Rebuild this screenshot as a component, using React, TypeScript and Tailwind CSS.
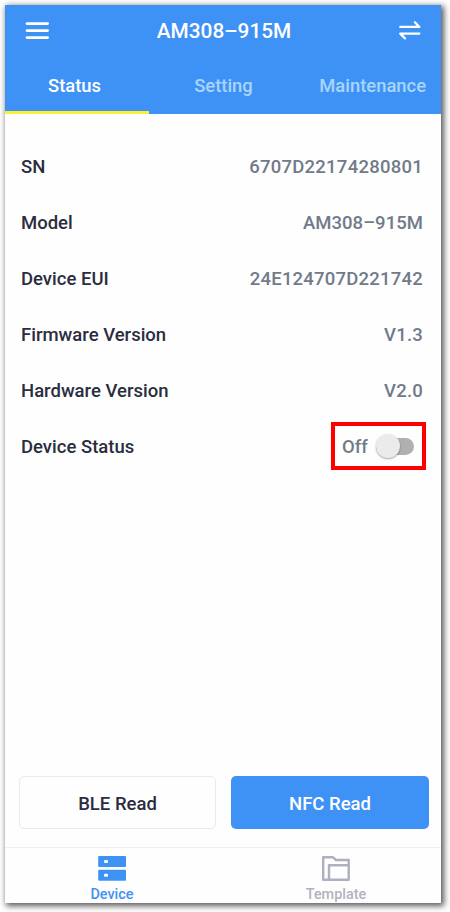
import React from "react";

const rows = [
  { label: "SN", value: "6707D22174280801", spacing: "tracking-[0.25px]" },
  { label: "Model", value: "AM308–915M", spacing: "tracking-[0.05px]" },
  { label: "Device EUI", value: "24E124707D221742", spacing: "tracking-[0.22px]" },
  { label: "Firmware Version", value: "V1.3", spacing: "tracking-[0.2px]" },
  { label: "Hardware Version", value: "V2.0", spacing: "tracking-[0.2px]" },
];

function MenuIcon() {
  return (
    <svg width="24" height="18" viewBox="0 0 24 18" stroke="#fff" strokeWidth="2.6" strokeLinecap="round">
      <path d="M1.9 1.6H22.7M1.9 8.6H22.7M1.9 15.6H22.7" />
    </svg>
  );
}

function SwapIcon() {
  return (
    <svg width="22" height="20" viewBox="0 0 22 20" fill="none" stroke="#fff" strokeWidth="2.2" strokeLinecap="round" strokeLinejoin="round">
      <path d="M1.2 5.9H20.4L15.9 1.2M20.4 12.6H1.2L6 17.4" />
    </svg>
  );
}

function DeviceIcon() {
  return (
    <svg width="28" height="25" viewBox="0 0 28 25">
      <rect x="0.2" width="27.8" height="11" rx="1" fill="#3f92f5" />
      <rect x="0.2" y="13.8" width="27.8" height="11" rx="1" fill="#3f92f5" />
      <rect x="6" y="4" width="4" height="3" rx="1.2" fill="#fff" />
      <rect x="6" y="17.7" width="4" height="3" rx="1.2" fill="#fff" />
    </svg>
  );
}

function TemplateIcon() {
  return (
    <svg width="28" height="25" viewBox="0 0 28 25" fill="none" stroke="#afb0bf" strokeWidth="2.4" strokeLinejoin="round">
      <path d="M1.2 1.2H10.8L14 4H26.7V23.7H1.2Z" />
      <path d="M7 23.7V9.3H26.7" />
    </svg>
  );
}

export default function App() {
  return (
    <div className="h-[912px] w-[450px] overflow-hidden bg-white pl-[5px] pt-[5px] font-['Roboto',sans-serif] font-medium">
      <div className="flex h-[898px] w-[436px] flex-col bg-[#fefefe] shadow-[2px_2px_6px_1px_rgba(0,0,0,0.65)]">
        <header className="flex h-[109px] flex-col bg-[#3f92f5] text-white">
          <div className="flex h-[51px] items-center justify-between pl-5 pr-5">
            <MenuIcon />
            <h1 className="text-[20.8px] leading-6">AM308–915M</h1>
            <SwapIcon />
          </div>
          <nav className="flex h-[58px] text-[18.4px] leading-[22px]">
            <div className="w-36 border-b-[3px] border-[#fcee30] pr-[5px] pt-[19px] text-center">Status</div>
            <div className="w-[149px] pt-[19px] text-center text-[#a9d5fc]">Setting</div>
            <div className="flex-1 pr-[15px] pt-[19px] text-right text-[#a9d5fc]">Maintenance</div>
          </nav>
        </header>
        <main className="flex flex-1 flex-col pt-6 text-[18.5px] leading-7 text-[#2b2d3e]">
          {rows.map((row) => (
            <div key={row.label} className="flex h-14 items-center justify-between pl-4 pr-[18px] pt-0.5">
              <span>{row.label}</span>
              <span className={`text-[#717a88] ${row.spacing}`}>{row.value}</span>
            </div>
          ))}
          <div className="flex h-14 items-center justify-between pl-4 pr-[15px]">
            <span className="pt-0.5">Device Status</span>
            <div className="flex h-12 w-[95px] items-center border-4 border-[#ff0000] pl-[7px] text-[#717a88]">
              <span className="w-[34px] pt-0.5">Off</span>
              <div className="flex h-[17px] w-[38px] items-center rounded-full bg-[#b2afb2]">
                <div className="size-6 shrink-0 rounded-full bg-[#ebebeb] shadow-[0_1px_2px_rgba(0,0,0,0.35)]" />
              </div>
            </div>
          </div>
          <div className="mt-auto flex gap-[15px] pb-[18px] pl-[14px] pr-3">
            <button className="h-[53px] w-[197px] rounded-[5px] border border-[#e9e9f1] pt-[3px]">BLE Read</button>
            <button className="h-[53px] w-[198px] rounded-[5px] bg-[#3f92f5] pt-[3px] text-white">NFC Read</button>
          </div>
        </main>
        <footer className="flex h-14 border-t border-[#efeff1] pr-1 text-[14.4px] leading-4">
          <div className="flex w-[214px] flex-col items-center gap-1.5 pt-2 text-[#3f92f5]">
            <DeviceIcon />
            <span>Device</span>
          </div>
          <div className="flex flex-1 flex-col items-center gap-1.5 pl-[16px] pt-2 text-[#b1b2c0]">
            <TemplateIcon />
            <span>Template</span>
          </div>
        </footer>
      </div>
    </div>
  );
}
